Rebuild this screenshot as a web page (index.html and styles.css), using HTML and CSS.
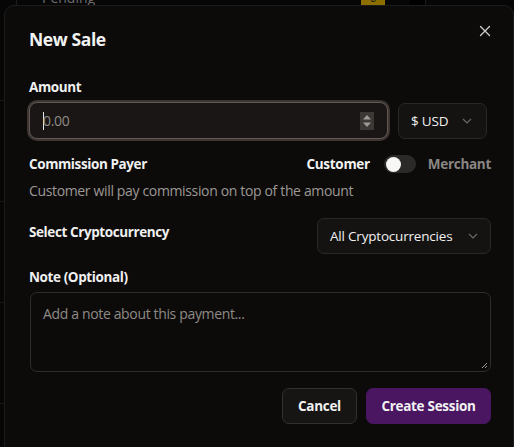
FILE: index.html
```html
<!DOCTYPE html>
<html>
<head>
<meta charset="utf-8">
<link rel="stylesheet" href="styles.css">
</head>
<body>
<div class="page">
  <div class="bg-row">
    <span class="bg-label">Pending</span>
    <span class="bg-badge">0</span>
    <span class="bg-block"></span>
  </div>
  <div class="bg-lines">
    <div class="bg-line"></div>
    <div class="bg-line"></div>
    <div class="bg-line"></div>
    <div class="bg-line"></div>
  </div>
</div>

<div class="dialog">
  <div class="dialog-header">
    <h2 class="title">New Sale</h2>
    <button class="close" aria-label="Close">
      <svg width="12" height="12" viewBox="0 0 12 12"><path d="M1.5 1.5 L10.5 10.5 M10.5 1.5 L1.5 10.5" stroke="#cfcfcf" stroke-width="1.3" fill="none" stroke-linecap="round"/></svg>
    </button>
  </div>

  <div class="field">
    <label class="label">Amount</label>
    <div class="amount-row">
      <div class="input focused">
        <span class="caret"></span><span class="placeholder">0.00</span>
        <span class="spinner">
          <svg width="14" height="18" viewBox="0 0 14 18"><rect width="14" height="18" fill="#3b3836"/><path d="M3 7.5 L7 3 L11 7.5 Z" fill="#9e9a97"/><path d="M3 10.5 L7 15 L11 10.5 Z" fill="#9e9a97"/></svg>
        </span>
      </div>
      <div class="select usd">
        <span>$ USD</span>
        <svg class="chev" width="10" height="6" viewBox="0 0 10 6"><path d="M1 1 L5 5 L9 1" stroke="#6b6866" stroke-width="1.2" fill="none"/></svg>
      </div>
    </div>
  </div>

  <div class="row commission">
    <span class="label">Commission Payer</span>
    <div class="toggle-group">
      <span class="opt active">Customer</span>
      <span class="switch"><span class="knob"></span></span>
      <span class="opt muted">Merchant</span>
    </div>
  </div>
  <p class="hint">Customer will pay commission on top of the amount</p>

  <div class="row crypto">
    <span class="label">Select Cryptocurrency</span>
    <div class="select crypto-select">
      <span>All Cryptocurrencies</span>
      <svg class="chev" width="10" height="6" viewBox="0 0 10 6"><path d="M1 1 L5 5 L9 1" stroke="#6b6866" stroke-width="1.2" fill="none"/></svg>
    </div>
  </div>

  <div class="field note">
    <label class="label">Note (Optional)</label>
    <div class="textarea">
      <span class="placeholder">Add a note about this payment...</span>
      <svg class="grip" width="8" height="8" viewBox="0 0 8 8"><path d="M7 2 L2 7 M7 5 L5 7" stroke="#9a9a9a" stroke-width="1" fill="none"/></svg>
    </div>
  </div>

  <div class="actions">
    <button class="btn cancel">Cancel</button>
    <button class="btn primary">Create Session</button>
  </div>
</div>
</body>
</html>
```

FILE: styles.css
```css
* { box-sizing: border-box; }
html, body { margin: 0; padding: 0; }
body {
  width: 514px;
  height: 447px;
  overflow: hidden;
  background: #060606;
  font-family: "Open Sans", "Noto Sans", sans-serif;
  color: #f2f2f2;
  position: relative;
}

.page { position: absolute; inset: 0; }
.bg-row {
  height: 16px;
  margin-top: -10px;
  display: flex;
  align-items: flex-start;
  border-left: 1px solid #1c1c1c;
  margin-left: 16px;
  position: relative;
}
.bg-label {
  margin-left: 25px;
  font-size: 14px;
  color: #6e6e6e;
  line-height: 16px;
}
.bg-badge {
  margin-left: 266px;
  width: 24px;
  height: 16px;
  background: #8c6f00;
  color: #222;
  font-size: 12px;
  text-align: center;
  line-height: 16px;
}
.bg-block {
  margin-left: 25px;
  width: 16px;
  height: 16px;
  background: #000;
  border-right: 1px solid #1c1c1c;
}
.bg-lines { position: absolute; left: 0; top: 0; width: 5px; height: 447px; }
.bg-line { height: 1px; background: #161616; margin-top: 100px; }

.dialog {
  position: absolute;
  left: 4px;
  top: 5px;
  width: 510px;
  height: 460px;
  background: #0c0b0a;
  border: 1px solid #1d1c1b;
  border-radius: 10px;
  padding: 16px 23px 0 24px;
}

.dialog-header {
  display: flex;
  justify-content: space-between;
  align-items: flex-start;
  height: 56px;
}
.title {
  margin: 6px 0 0 0;
  font-size: 17.5px;
  font-weight: 700;
  line-height: 22px;
  letter-spacing: -0.4px;
}
.close {
  background: none;
  border: none;
  padding: 0;
  margin: 3px -1px 0 0;
  width: 12px;
  height: 12px;
  display: flex;
}

.label {
  font-size: 13.5px;
  font-weight: 700;
  color: #f0f0f0;
  line-height: 18px;
  letter-spacing: -0.4px;
}
.field { display: flex; flex-direction: column; }
.field .label { margin-bottom: 6px; }

.amount-row { display: flex; gap: 10px; align-items: center; }
.input {
  flex: 1;
  height: 37px;
  margin-left: 0;
  background: #191615;
  border-radius: 8px;
  display: flex;
  align-items: center;
  padding: 0 12px 0 13px;
  position: relative;
}
.input.focused {
  border: 1px solid #625955;
  box-shadow: 0 0 0 2px #3c3532;
}
.caret { width: 1px; height: 18px; background: #e6e6e6; margin-right: -1px; }
.placeholder { font-size: 14px; color: #8f8a86; letter-spacing: -0.35px; }
.spinner { margin-left: auto; display: flex; margin-right: 1px; }

.select {
  height: 36px;
  background: #141312;
  border: 1px solid #2a2827;
  border-radius: 7px;
  display: flex;
  align-items: center;
  font-size: 13.5px;
  color: #f0f0f0;
  letter-spacing: -0.2px;
}
.usd { width: 89px; padding: 0 12px; gap: 14px; margin-right: 3px; }
.chev { flex: none; }

.row { display: flex; justify-content: space-between; align-items: center; }
.commission { margin-top: 15px; height: 20px; }
.toggle-group { display: flex; align-items: center; margin-right: -1px; }
.opt { font-size: 13.5px; font-weight: 700; letter-spacing: -0.3px; }
.opt.muted { color: #8a8683; }
.switch {
  width: 32px;
  height: 18px;
  border-radius: 9px;
  background: #2b2a29;
  margin: 0 12px 0 14px;
  position: relative;
  display: flex;
  align-items: center;
  padding: 2px;
}
.knob { width: 15px; height: 15px; border-radius: 50%; background: #f7f7f5; }

.hint {
  margin: 8px 0 0 0;
  font-size: 14px;
  color: #9c9895;
  line-height: 18px;
  letter-spacing: -0.35px;
}

.crypto { margin-top: 18px; align-items: flex-start; }
.crypto .label { margin-top: 5px; }
.crypto-select { width: 174px; padding: 0 12px; justify-content: space-between; margin-right: -1px; height: 36px; }

.note { margin-top: 14px; }
.note .label { margin-bottom: 6px; }
.textarea {
  height: 80px;
  margin-left: 1px;
  margin-right: -1px;
  border: 1px solid #2f2d2c;
  border-radius: 7px;
  background: #0c0b0a;
  padding: 9px 12px;
  position: relative;
}
.grip { position: absolute; right: 2px; bottom: 2px; }

.actions {
  display: flex;
  justify-content: flex-end;
  gap: 9px;
  margin-top: 16px;
  margin-right: -1px;
}
.btn {
  height: 36px;
  border-radius: 7px;
  font-family: inherit;
  font-size: 13.5px;
  font-weight: 700;
  letter-spacing: -0.3px;
  color: #f2f2f2;
  padding: 0;
  white-space: nowrap;
}
.cancel { width: 75px; background: #161514; border: 1px solid #323030; }
.primary { width: 125px; background: #4a1662; border: 1px solid #4a1662; }
```
